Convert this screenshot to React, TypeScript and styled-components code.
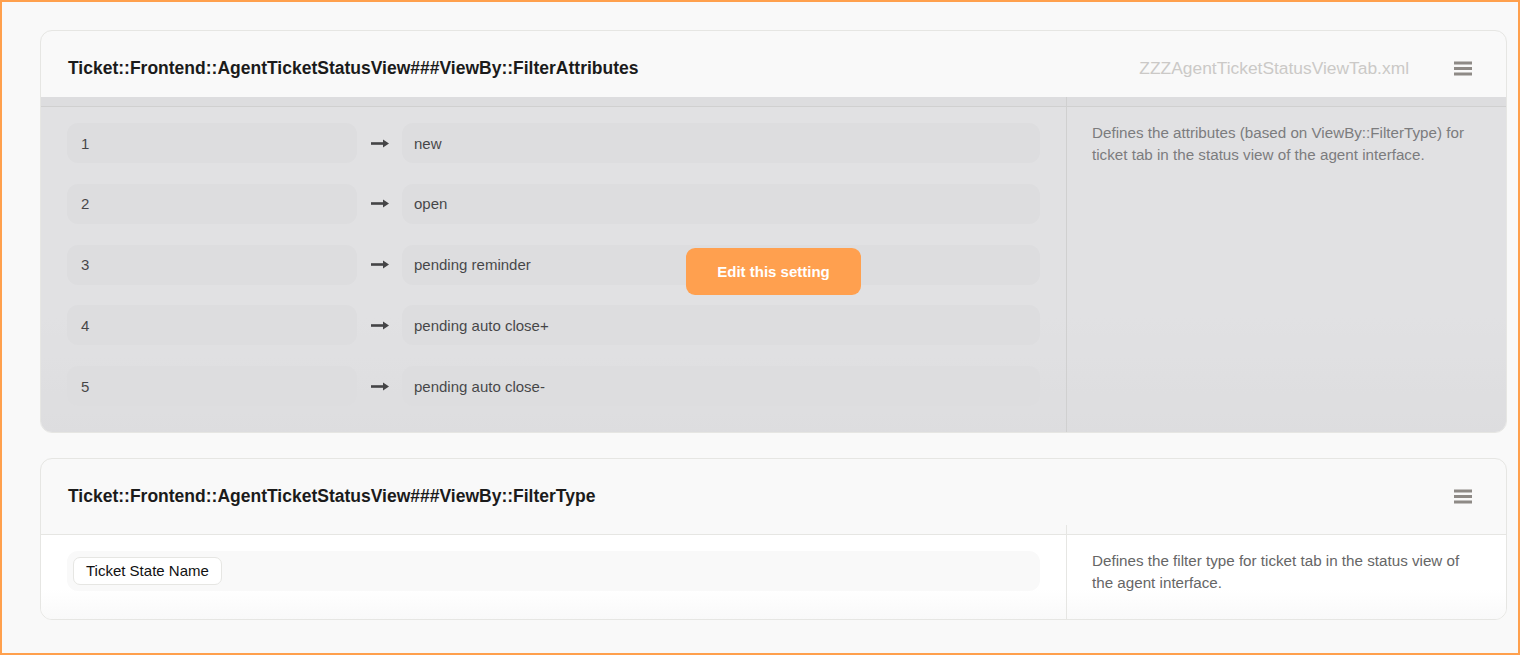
import React from "react";
import styled, { createGlobalStyle } from "styled-components";

const GlobalStyle = createGlobalStyle`
  html, body { margin: 0; padding: 0; background: #f9f9f9; }
  body { font-family: "Liberation Sans", Arial, sans-serif; overflow: hidden; }
  * { box-sizing: border-box; }
`;

const Frame = styled.div`
  height: 655px;
  border: 2px solid #ffa04d;
  background: #f9f9f9;
  padding: 28px 11px 0 38px;
  display: flex;
  flex-direction: column;
  gap: 25px;
`;

const Card = styled.section`
  border: 1px solid #e6e6e3;
  border-radius: 12px;
  background: #f9f9f9;
  overflow: hidden;
`;

const Header = styled.header`
  height: 76px;
  display: flex;
  align-items: center;
  padding: 0 34px 0 27px;
  border-bottom: 1px solid #e6e6e3;
`;

const Title = styled.h2`
  flex: 1;
  margin: 0;
  font-size: 17.5px;
  font-weight: 700;
  color: #1b1b1b;
`;

const FileName = styled.span`
  font-size: 17.4px;
  color: #cbc9c7;
  margin-right: 45px;
`;

const MenuButton = styled.button`
  border: 0;
  background: none;
  padding: 0;
  width: 18px;
  height: 16px;
  display: flex;
  align-items: center;
  justify-content: center;
  cursor: pointer;
`;

const Body = styled.div`
  position: relative;
  display: grid;
  grid-template-columns: 1fr 440px;
  background: linear-gradient(#ffffff 65%, #f9f9f9);
`;

const Content = styled.div`
  padding: 16px 26px 26px;
  display: flex;
  flex-direction: column;
  gap: 20.75px;
`;

const Description = styled.p`
  position: relative;
  margin: 0;
  padding: 15px 26px 25px 25px;
  border-left: 1px solid #e6e6e3;
  font-size: 15.2px;
  line-height: 22px;
  color: #666;

  &::before {
    content: "";
    position: absolute;
    left: -1px;
    top: -10px;
    height: 10px;
    width: 1px;
    background: #e6e6e3;
  }
`;

const Row = styled.div`
  display: grid;
  grid-template-columns: 290px 45px 1fr;
  align-items: center;
`;

const Field = styled.div<{ $pad?: number }>`
  height: 40px;
  display: flex;
  align-items: center;
  gap: 6px;
  padding: 0 ${(p) => p.$pad ?? 12}px;
  background: #f9f9f9;
  border-radius: 11px;
  font-size: 15px;
  color: #111;
`;

const Arrow = styled.span`
  display: flex;
  justify-content: center;
  color: #111;
`;

const Chip = styled.span`
  height: 28px;
  margin-top: -1px;
  display: inline-flex;
  align-items: center;
  padding: 0 12px;
  background: #fff;
  border: 1px solid #e6e6e3;
  border-radius: 7px;
  font-size: 15px;
  color: #111;
`;

const Overlay = styled.div`
  position: absolute;
  left: 0;
  right: 0;
  top: -10px;
  bottom: 0;
  background: rgba(168, 168, 174, 0.34);
  display: flex;
  align-items: center;
  justify-content: center;
  padding-top: 14px;
`;

const EditButton = styled.button`
  width: 175px;
  height: 47px;
  border: 0;
  border-radius: 9px;
  background: #ffa04f;
  color: #fff;
  font-family: "Liberation Sans", Arial, sans-serif;
  font-size: 15px;
  font-weight: 700;
  cursor: pointer;
`;

const MenuIcon = () => (
  <svg width="18" height="15" viewBox="0 0 18 15" aria-hidden>
    <rect x="0" y="0.5" width="18" height="3" fill="#8e8a86" />
    <rect x="0" y="6" width="18" height="3" fill="#8e8a86" />
    <rect x="0" y="11.5" width="18" height="3" fill="#8e8a86" />
  </svg>
);

const LongArrow = () => (
  <svg width="18" height="9" viewBox="0 0 18 9" aria-hidden>
    <rect x="0" y="3.2" width="13" height="2.6" fill="currentColor" />
    <path d="M12 0.5 L18 4.5 L12 8.5 Z" fill="currentColor" />
  </svg>
);

const pairs: [string, string][] = [
  ["1", "new"],
  ["2", "open"],
  ["3", "pending reminder"],
  ["4", "pending auto close+"],
  ["5", "pending auto close-"],
];

export default function App() {
  return (
    <>
      <GlobalStyle />
      <Frame>
        <Card>
          <Header>
            <Title>Ticket::Frontend::AgentTicketStatusView###ViewBy::FilterAttributes</Title>
            <FileName>ZZZAgentTicketStatusViewTab.xml</FileName>
            <MenuButton aria-label="Menu">
              <MenuIcon />
            </MenuButton>
          </Header>
          <Body>
            <Content>
              {pairs.map(([k, v]) => (
                <Row key={k}>
                  <Field $pad={14}>{k}</Field>
                  <Arrow>
                    <LongArrow />
                  </Arrow>
                  <Field>{v}</Field>
                </Row>
              ))}
            </Content>
            <Description>
              Defines the attributes (based on ViewBy::FilterType) for ticket tab in the status view of the agent interface.
            </Description>
            <Overlay>
              <EditButton>Edit this setting</EditButton>
            </Overlay>
          </Body>
        </Card>
        <Card>
          <Header>
            <Title>Ticket::Frontend::AgentTicketStatusView###ViewBy::FilterType</Title>
            <MenuButton aria-label="Menu">
              <MenuIcon />
            </MenuButton>
          </Header>
          <Body>
            <Content>
              <Field $pad={6}>
                <Chip>Ticket State Name</Chip>
              </Field>
            </Content>
            <Description>
              Defines the filter type for ticket tab in the status view of the agent interface.
            </Description>
          </Body>
        </Card>
      </Frame>
    </>
  );
}
